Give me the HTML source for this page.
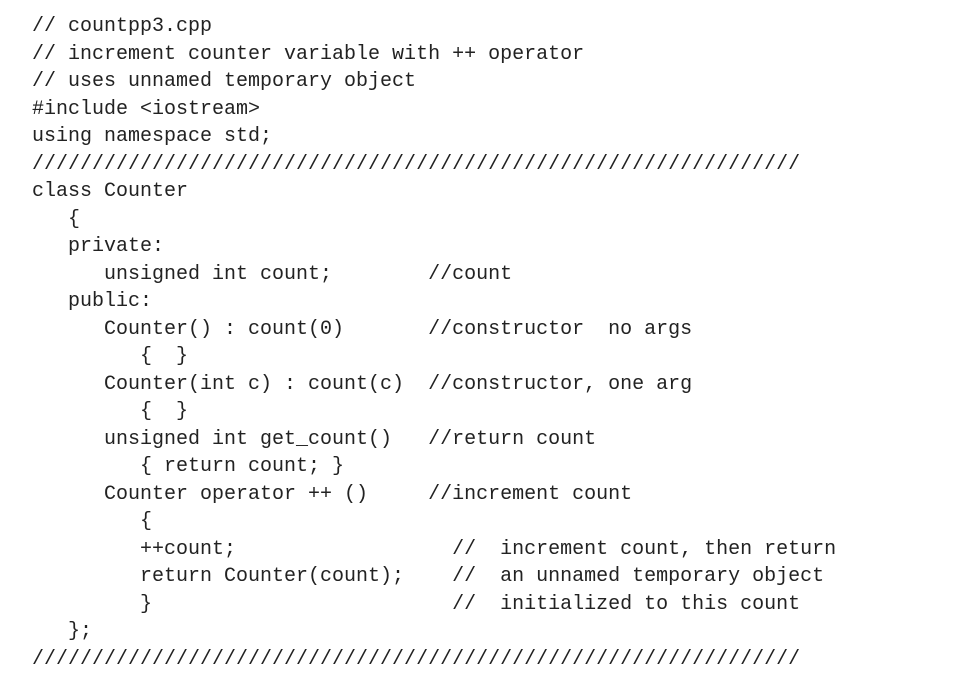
<!DOCTYPE html>
<html><head><meta charset="utf-8"><style>
html,body{margin:0;padding:0;background:#fff;width:956px;height:673px;overflow:hidden}
pre{margin:0;position:absolute;left:32px;top:13px;font-family:"Liberation Mono",monospace;font-size:20px;line-height:27.5px;color:#222}
</style></head><body>
<pre>// countpp3.cpp
// increment counter variable with ++ operator
// uses unnamed temporary object
#include &lt;iostream&gt;
using namespace std;
////////////////////////////////////////////////////////////////
class Counter
   {
   private:
      unsigned int count;        //count
   public:
      Counter() : count(0)       //constructor  no args
         {  }
      Counter(int c) : count(c)  //constructor, one arg
         {  }
      unsigned int get_count()   //return count
         { return count; }
      Counter operator ++ ()     //increment count
         {
         ++count;                  //  increment count, then return
         return Counter(count);    //  an unnamed temporary object
         }                         //  initialized to this count
   };
////////////////////////////////////////////////////////////////</pre>
</body></html>
